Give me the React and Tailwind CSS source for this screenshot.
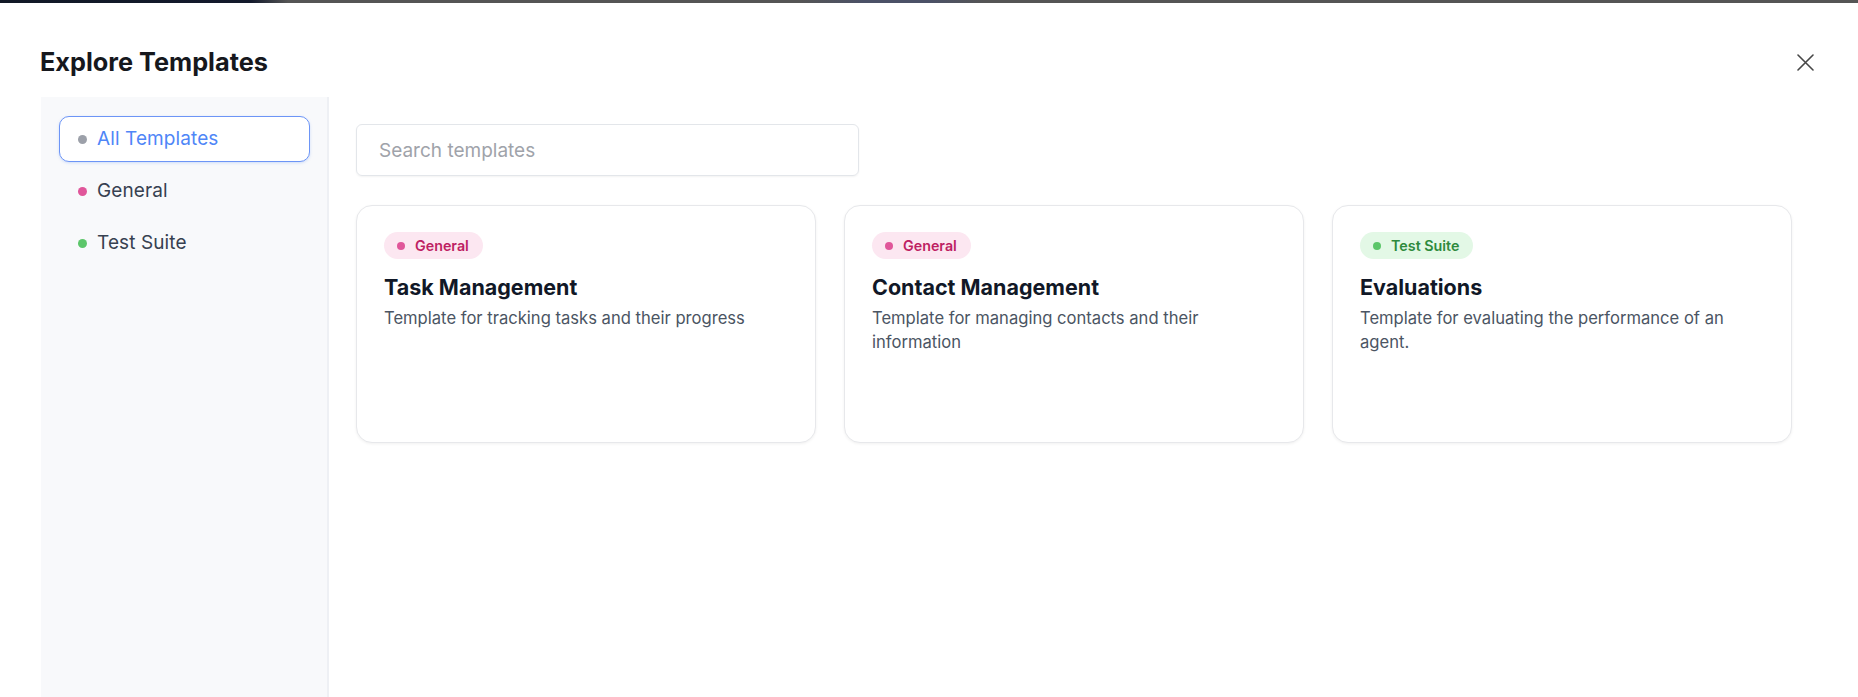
import React from "react";

const FONT = { fontFamily: "Inter, 'Noto Sans', sans-serif" };

function Dot({ className }) {
  return <span className={"inline-block shrink-0 rounded-full " + className} />;
}

function SideItem({ label, dot, active }) {
  return (
    <div
      className={
        "h-[46px] flex items-center pl-[18px] gap-[10px] rounded-[10px] border text-[19px] tracking-[0.1px] " +
        (active
          ? "border-[#6d95f6] bg-white text-[#4f86f7] shadow-[0_1px_3px_rgba(79,134,247,0.25)]"
          : "border-transparent text-[#374151]")
      }
    >
      <Dot className={"w-[9px] h-[9px] " + dot} />
      <span>{label}</span>
    </div>
  );
}

function Badge({ label, tone }) {
  const styles =
    tone === "pink"
      ? { wrap: "bg-[#fce7f1] text-[#be1f63]", dot: "bg-[#e0569a]" }
      : { wrap: "bg-[#e3f8e6] text-[#2e8a3d]", dot: "bg-[#5cc66a]" };
  return (
    <div
      className={
        "h-[27px] rounded-full pl-[13px] pr-[14px] flex items-center gap-[10px] text-[14.3px] font-semibold " +
        styles.wrap
      }
    >
      <Dot className={"w-2 h-2 " + styles.dot} />
      <span>{label}</span>
    </div>
  );
}

function Card({ badge, tone, title, desc }) {
  return (
    <div className="h-[238px] rounded-2xl border border-[#e7e8eb] bg-white shadow-[0_1px_3px_rgba(0,0,0,0.06)] px-[27px] pt-[26px] pb-[27px] flex flex-col items-start">
      <Badge label={badge} tone={tone} />
      <div className="mt-[14px] text-[21.5px] leading-[28px] font-bold text-[#111827]">{title}</div>
      <div className="mt-[5px] text-[16.6px] leading-[24px] text-[#4b5563]">{desc}</div>
    </div>
  );
}

export default function App() {
  return (
    <div className="w-[1858px] h-[697px] overflow-hidden bg-white flex flex-col" style={FONT}>
      <div className="h-[3px] shrink-0 bg-[linear-gradient(90deg,#121826_0%,#131a2c_13.5%,#555555_15.5%,#555555_43%,#4b5167_46.5%,#4b5167_50%,#555555_53%,#555555_100%)]" />
      <div className="h-[94px] shrink-0 flex items-start justify-between pl-[40px] pr-[44px] pt-[41px]">
        <div className="h-[36px] leading-[36px] text-[25.3px] font-bold text-[#16181d]">Explore Templates</div>
        <div className="h-[36px] flex items-center">
          <svg width="17" height="17" viewBox="0 0 17 17" fill="none">
            <path d="M1 1L16 16M16 1L1 16" stroke="#474747" strokeWidth="1.6" strokeLinecap="round" />
          </svg>
        </div>
      </div>
      <div className="flex-1 flex pl-[41px] min-h-0">
        <aside className="w-[288px] shrink-0 bg-[#f8f9fb] border-r-2 border-[#eef0f4] pt-[19px] pl-[18px] pr-[17px] flex flex-col gap-[6px]">
          <SideItem label="All Templates" dot="bg-[#9ca0a9]" active />
          <SideItem label="General" dot="bg-[#e0569a]" />
          <SideItem label="Test Suite" dot="bg-[#5cc66a]" />
        </aside>
        <main className="flex-1 pl-[27px] pt-[27px]">
          <input
            className="w-[503px] h-[52px] rounded-md border border-[#e3e6ea] shadow-[0_1px_2px_rgba(0,0,0,0.05)] pl-[22px] text-[19px] outline-none placeholder:text-[#9fa3aa]"
            placeholder="Search templates"
          />
          <div className="mt-[29px] grid grid-cols-[460px_460px_460px] gap-x-[28px]">
            <Card
              badge="General"
              tone="pink"
              title="Task Management"
              desc="Template for tracking tasks and their progress"
            />
            <Card
              badge="General"
              tone="pink"
              title="Contact Management"
              desc="Template for managing contacts and their information"
            />
            <Card
              badge="Test Suite"
              tone="green"
              title="Evaluations"
              desc="Template for evaluating the performance of an agent."
            />
          </div>
        </main>
      </div>
    </div>
  );
}
